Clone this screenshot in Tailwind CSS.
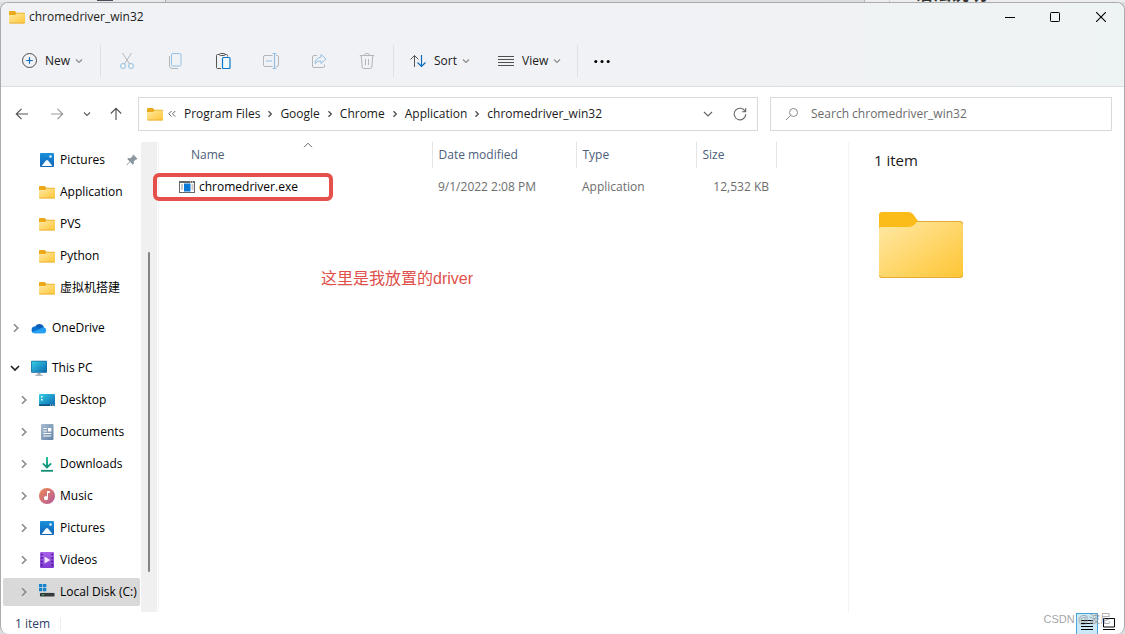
<!DOCTYPE html>
<html lang="en">
<head>
<meta charset="utf-8">
<title>chromedriver_win32</title>
<script src="https://cdn.jsdelivr.net/npm/@tailwindcss/browser@4"></script>
</head>
<body class="flex h-screen flex-col overflow-hidden bg-[#dcdedf] font-['Open_Sans','Noto_Sans_CJK_SC',sans-serif] text-[12px] leading-4 text-[#1a1a1a]">

<svg class="absolute size-0" aria-hidden="true">
  <defs>
    <linearGradient id="g-folder" x1="0" y1="0" x2="1" y2="1"><stop offset="0" stop-color="#ffe9a6"/><stop offset="1" stop-color="#ffc533"/></linearGradient>
    <linearGradient id="g-pic" x1="0" y1="0" x2="0" y2="1"><stop offset="0" stop-color="#1a92dc"/><stop offset="1" stop-color="#0f62b4"/></linearGradient>
    <linearGradient id="g-screen" x1="0" y1="0" x2="1" y2="1"><stop offset="0" stop-color="#36d0e6"/><stop offset="1" stop-color="#0b66ae"/></linearGradient>
    <linearGradient id="g-doc" x1="0" y1="0" x2="1" y2="1"><stop offset="0" stop-color="#a9bdd2"/><stop offset="1" stop-color="#6482a6"/></linearGradient>
    <linearGradient id="g-down" x1="0" y1="0" x2="0" y2="1"><stop offset="0" stop-color="#2cc29a"/><stop offset="1" stop-color="#0d9277"/></linearGradient>
    <linearGradient id="g-music" x1="0" y1="0" x2="1" y2="1"><stop offset="0" stop-color="#ec8a52"/><stop offset="1" stop-color="#b3599e"/></linearGradient>
    <linearGradient id="g-video" x1="0" y1="0" x2="0" y2="1"><stop offset="0" stop-color="#a861e8"/><stop offset="1" stop-color="#7e3bd0"/></linearGradient>
  </defs>
  <symbol id="folder" viewBox="0 0 16 16">
    <path d="M0 3a1 1 0 0 1 1-1h4.800l1.600 1.800H15a1 1 0 0 1 1 1V6H0z" fill="#e9aa1c"/>
    <path d="M0 6h6.200l1.400-1.500H15.200a.8.800 0 0 1 .8.800V13.500a1 1 0 0 1-1 1H1a1 1 0 0 1-1-1z" fill="url(#g-folder)"/>
    <path d="M.4 14h15.200" stroke="#e3ab35" stroke-width=".8"/>
  </symbol>
  <symbol id="pictures" viewBox="0 0 16 16">
    <rect x="1" y="1" width="14" height="14" rx="1" fill="url(#g-pic)"/>
    <circle cx="11.500" cy="4.500" r="1.300" fill="#d9efff"/>
    <path d="M2.500 14 7 8.600q1-1 2 0L13.500 14z" fill="#f4faff"/>
  </symbol>
  <symbol id="onedrive" viewBox="0 0 16 16">
    <path d="M4.200 6.500A5 5 0 0 1 13 7l-2 4-8 .5z" fill="#0f5db5"/>
    <path d="M3.500 13.200A3.300 3.300 0 0 1 4.300 6.600c2 0 3 1 4.500 2z" fill="#0a70cf"/>
    <path d="M3.500 13.200 9.500 8.400A4 4 0 0 1 12.700 7.200 3.100 3.100 0 0 1 13 13.200z" fill="#1f9df0"/>
    <path d="M1.200 12 8 9.300l7 2.600q-.7 1.300-2 1.300H3.500q-1.500 0-2.300-1.200z" fill="#2aa2f2"/>
  </symbol>
  <symbol id="pc" viewBox="0 0 16 16">
    <rect x="0" y=".8" width="16" height="12" rx="1" fill="#15649a"/>
    <rect x=".6" y="1.400" width="14.800" height="10.800" rx=".4" fill="url(#g-screen)"/>
    <path d="M6.500 12.800h3v2h-3z" fill="#9aa8b3"/><path d="M4.300 15.200h7.400" stroke="#8e9ba6" stroke-width="1"/>
  </symbol>
  <symbol id="desktop" viewBox="0 0 16 16">
    <rect x="0" y="2" width="16" height="12" rx="1" fill="url(#g-screen)"/>
    <path d="M2 4h1.500v1.500H2zM2 7h1.500v1.500H2z" fill="#fff"/>
    <path d="M0 12.300h16V13a1 1 0 0 1-1 1H1a1 1 0 0 1-1-1z" fill="#0c5686"/>
    <path d="M11 13h1m1 0h.8m.7 0h.8" stroke="#fff" stroke-width=".9"/>
  </symbol>
  <symbol id="documents" viewBox="0 0 16 16">
    <rect x="2" y="0" width="12.500" height="16" rx="1" fill="url(#g-doc)"/>
    <path d="M4.300 4.500h3.500M4.300 7h3.500M4.300 9.500h8M4.300 12h8" stroke="#fff" stroke-width="1.100"/><path d="M9 4h3.300v3.500H9z" fill="#fff"/>
  </symbol>
  <symbol id="downloads" viewBox="0 0 16 16">
    <path d="M8 1v10.500M3.800 7.300 8 11.500l4.200-4.200" fill="none" stroke="url(#g-down)" stroke-width="1.800"/>
    <path d="M7.100 1h1.800v10H7.100z" fill="url(#g-down)"/>
    <path d="M2 14.800h12" stroke="#128f74" stroke-width="1.800"/>
  </symbol>
  <symbol id="music" viewBox="0 0 16 16">
    <circle cx="8" cy="8" r="8" fill="url(#g-music)"/>
    <path d="M8 3h2.800v1.900H9v5.300a2 2 0 1 1-1-1.800z" fill="#fff"/>
  </symbol>
  <symbol id="videos" viewBox="0 0 16 16">
    <rect x="1" y="0" width="14" height="16" rx="1" fill="url(#g-video)"/>
    <path d="M2 2.500h1.600M2 6h1.600M2 9.500h1.600M2 13h1.600M12.400 2.500H14M12.400 6H14M12.400 9.500H14M12.400 13H14" stroke="#431a86" stroke-width="1.600"/>
    <path d="M5.500 4.500v7L11.300 8z" fill="#f2e8ff"/>
  </symbol>
  <symbol id="disk" viewBox="0 0 16 16">
    <path d="M0 0h3.300v3.200H0zM4 0h3.300v3.200H4zM0 4h3.300v3.200H0zM4 4h3.300v3.200H4z" fill="#1683cf"/>
    <path d="M2 8h12l1.500 1.500H1z" fill="#c9cccf"/><rect x="1" y="9" width="14.500" height="3.500" rx=".4" fill="#353a3d"/>
    <path d="M3 10.800h2" stroke="#3ad26b" stroke-width="1"/>
  </symbol>
  <symbol id="right" viewBox="0 0 8 10"><path d="M2 1.200 5.800 5 2 8.800" fill="none" stroke="currentColor" stroke-width="1.600"/></symbol>
  <symbol id="crumb" viewBox="0 0 8 10"><path d="M2.500 2.200 5.300 5 2.500 7.800" fill="none" stroke="currentColor" stroke-width="1.400"/></symbol>
  <symbol id="small-down" viewBox="0 0 10 8"><path d="M2 2.500 5 5.500l3-3" fill="none" stroke="currentColor" stroke-width="1.100"/></symbol>
  <symbol id="down" viewBox="0 0 10 8"><path d="M1 2 5 6l4-4" fill="none" stroke="currentColor" stroke-width="1.200"/></symbol>
</svg>

<div class="flex h-[2px] shrink-0 overflow-hidden">
  <div class="w-[166px] border-r border-[#a9abad] bg-[#e8e9ea] pl-[97px]"><div class="h-px w-4 bg-[#4a4a58]"></div></div>
  <div class="flex-1"></div>
  <div class="w-[261px] border-l border-[#b5b5b5] bg-[#ededed]">
    <div class="relative ml-6 h-full overflow-hidden border-l border-[#d0d0d0]"><span class="absolute -bottom-[3px] left-[25px] text-[18px] leading-6 font-bold text-[#333]" lang="zh">语法说明</span></div>
  </div>
</div>

<div class="flex min-h-0 flex-1 flex-col overflow-hidden rounded-lg border-x border-t border-[#a9abad] bg-white">
  <header class="shrink-0 border-b border-[#dcdedf] bg-linear-to-r from-[#f1f2f5] from-60% to-[#eef3f3]">
    <div class="flex h-8 items-start justify-between">
      <h1 class="flex items-center gap-1 pt-[6px] pl-2 font-normal"><svg class="size-4"><use href="#folder"/></svg>chromedriver_win32</h1>
      <div class="flex text-black">
        <button class="grid h-7 w-[45px] place-items-center" aria-label="Minimize"><svg class="size-[10px]" viewBox="0 0 10 10"><path d="M0 5.500h10" stroke="currentColor"/></svg></button>
        <button class="grid h-7 w-[46px] place-items-center" aria-label="Maximize"><svg class="size-[10px]" viewBox="0 0 10 10"><rect x=".5" y=".5" width="9" height="9" rx=".8" fill="none" stroke="currentColor"/></svg></button>
        <button class="grid h-7 w-[46px] place-items-center" aria-label="Close"><svg class="size-[10px]" viewBox="0 0 10 10"><path d="m0 0 10 10M10 0 0 10" stroke="currentColor" stroke-width="1.100"/></svg></button>
      </div>
    </div>
    <div class="flex h-[51px] items-center">
      <button class="flex w-[99px] items-center pl-5">
        <svg class="size-4" viewBox="0 0 16 16" fill="none"><circle cx="8.500" cy="7.500" r="7" stroke="#4d4d4d"/><path d="M8.500 4.200v6.600M5.200 7.500h6.600" stroke="#0a6cbd" stroke-width="1.200"/></svg>
        <span class="ml-2">New</span><svg class="ml-1 h-2 w-[10px] text-[#8a8a8a]"><use href="#small-down"/></svg>
      </button>
      <div class="h-8 w-px bg-[#dfe0e2]"></div>
      <div class="flex pl-[2px]">
        <button class="grid size-12 place-items-center" aria-label="Cut"><svg class="size-4" viewBox="0 0 16 16" fill="none"><path d="M3.500 0 10.500 11M12.500 0 5.500 11" stroke="#b4b6b9"/><circle cx="4" cy="13" r="2.500" stroke="#93bfe2"/><circle cx="12" cy="13" r="2.500" stroke="#93bfe2"/></svg></button>
        <button class="grid size-12 place-items-center" aria-label="Copy"><svg class="size-4" viewBox="0 0 16 16" fill="none"><rect x="4.500" y=".5" width="9.500" height="12.500" rx="1.500" stroke="#93bfe2"/><path d="M2.500 3v10a2.500 2.500 0 0 0 2.500 2.500h6" stroke="#b4b6b9"/></svg></button>
        <button class="grid size-12 place-items-center" aria-label="Paste"><svg class="size-4" viewBox="0 0 16 16" fill="none"><path d="M6 15.500H2.500a1 1 0 0 1-1-1V2.500a1 1 0 0 1 1-1h2M10 1.500h1.500a1 1 0 0 1 1 1v1" stroke="#555"/><rect x="4.500" y=".5" width="5.500" height="2" rx="1" stroke="#555"/><rect x="7.500" y="4.500" width="7.500" height="11" rx="1" fill="#eefaff" stroke="#0a78c8" stroke-width="1.200"/></svg></button>
        <button class="grid size-12 place-items-center" aria-label="Rename"><svg class="size-4" viewBox="0 0 16 16" fill="none"><path d="M9.500 2.500H2A1.500 1.500 0 0 0 .5 4v8A1.500 1.500 0 0 0 2 13.500h7.500M13 2.500h1A1.500 1.500 0 0 1 15.500 4v8a1.500 1.500 0 0 1-1.500 1.500h-1" stroke="#b4b6b9"/><path d="M11.500.5v15M9.500.5h4M9.500 15.500h4M3 8h6" stroke="#93bfe2" stroke-width="1.200"/></svg></button>
        <button class="grid size-12 place-items-center" aria-label="Share"><svg class="size-4" viewBox="0 0 16 16" fill="none"><path d="M6 2.500H3A1.500 1.500 0 0 0 1.500 4v9A1.500 1.500 0 0 0 3 14.500h9a1.500 1.500 0 0 0 1.500-1.500v-1.500" stroke="#b4b6b9"/><path d="M10 1.500 15 6l-5 4.500V8Q6 7.800 4 10.500 4.500 5 10 4z" stroke="#93bfe2" stroke-linejoin="round"/></svg></button>
        <button class="grid size-12 place-items-center" aria-label="Delete"><svg class="size-4" viewBox="0 0 16 16" fill="none" stroke="#b4b6b9"><path d="M.8 2.500h14.400M5.500 2.500a2.500 2.200 0 0 1 5 0M2.200 2.500l1 11.500a1.500 1.500 0 0 0 1.500 1.500h6.600a1.500 1.500 0 0 0 1.500-1.500l1-11.500M6.500 6v6M9.500 6v6"/></svg></button>
      </div>
      <div class="ml-[2px] h-8 w-px bg-[#dfe0e2]"></div>
      <button class="flex w-[88px] items-center pl-4">
        <svg class="size-4" viewBox="0 0 16 16" fill="none"><path d="M4.500 14V2.500M.5 6.500l4-4 4 4" stroke="#555"/><path d="M11.500 2v11.500M7.500 9.500l4 4 4-4" stroke="#0a6cbd" stroke-width="1.200"/></svg>
        <span class="ml-2">Sort</span><svg class="ml-1 h-2 w-[10px] text-[#8a8a8a]"><use href="#small-down"/></svg>
      </button>
      <button class="flex w-[95px] items-center pl-4">
        <svg class="size-4" viewBox="0 0 16 16"><path d="M0 3.500h16M0 6.500h16M0 9.500h16M0 12.500h16" stroke="#505050"/></svg>
        <span class="ml-2">View</span><svg class="ml-1 h-2 w-[10px] text-[#8a8a8a]"><use href="#small-down"/></svg>
      </button>
      <div class="h-8 w-px bg-[#dfe0e2]"></div>
      <button class="pl-4" aria-label="See more"><svg class="size-4" viewBox="0 0 16 16"><circle cx="1.800" cy="8.500" r="1.500"/><circle cx="8" cy="8.500" r="1.500"/><circle cx="14.200" cy="8.500" r="1.500"/></svg></button>
    </div>
  </header>

  <div class="flex shrink-0 items-center pt-[10px] pr-3 pb-[11px]">
    <nav class="flex w-[137px] items-center text-[#5a5a5a]" aria-label="History">
      <button class="ml-[14px]" aria-label="Back"><svg class="h-4 w-[14px]" viewBox="0 0 14 16" fill="none" stroke="#555" stroke-width="1.200"><path d="M13 8H1.500M6.500 2.800 1.300 8l5.200 5.200"/></svg></button>
      <button class="ml-[21px]" aria-label="Forward"><svg class="h-4 w-[14px]" viewBox="0 0 14 16" fill="none" stroke="#9a9a9a" stroke-width="1.200"><path d="M1 8h11.500M7.500 2.800 12.700 8l-5.200 5.200"/></svg></button>
      <button class="ml-[18px]" aria-label="Recent locations"><svg class="h-2 w-[10px]"><use href="#small-down"/></svg></button>
      <button class="ml-[17px]" aria-label="Up"><svg class="h-4 w-[14px]" viewBox="0 0 14 16" fill="none" stroke="#555" stroke-width="1.200"><path d="M7 14V2.500M1.800 7.500 7 2.300l5.200 5.200"/></svg></button>
    </nav>
    <div class="flex h-[34px] flex-1 items-center border border-[#d9d9d9] pl-2">
      <svg class="size-4"><use href="#folder"/></svg>
      <svg class="ml-[5px] h-[10px] w-2" viewBox="0 0 8 10" fill="none" stroke="#666"><path d="M3.500 2 .8 4.800l2.700 2.800M7.200 2 4.500 4.800l2.700 2.800"/></svg>
      <nav class="ml-2 flex items-center gap-[6px]" aria-label="Path">
        <a href="#">Program Files</a><svg class="h-[10px] w-2 text-[#555]"><use href="#crumb"/></svg>
        <a href="#">Google</a><svg class="h-[10px] w-2 text-[#555]"><use href="#crumb"/></svg>
        <a href="#">Chrome</a><svg class="h-[10px] w-2 text-[#555]"><use href="#crumb"/></svg>
        <a href="#">Application</a><svg class="h-[10px] w-2 text-[#555]"><use href="#crumb"/></svg>
        <a href="#">chromedriver_win32</a>
      </nav>
      <button class="ml-auto" aria-label="Previous locations"><svg class="h-2 w-[10px] text-[#666]"><use href="#down"/></svg></button>
      <button class="mr-[10px] ml-5" aria-label="Refresh"><svg class="size-[14px]" viewBox="0 0 14 14" fill="none" stroke="#6a6a6a" stroke-width="1.100"><path d="M12.200 4.500A5.800 5.800 0 1 0 12.800 7M12.700 1v3.800H9"/></svg></button>
    </div>
    <label class="ml-3 flex h-[34px] w-[342px] items-center border border-[#d9d9d9] pl-[14px]">
      <svg class="size-[14px]" viewBox="0 0 14 14" fill="none" stroke="#8a8a8a"><circle cx="8.500" cy="5.500" r="4"/><path d="M5.700 8.300 1 13"/></svg>
      <input class="ml-3 min-w-0 flex-1 outline-none placeholder:text-[#6b6b6b]" type="text" placeholder="Search chromedriver_win32" aria-label="Search chromedriver_win32">
    </label>
  </div>

  <div class="flex min-h-0 flex-1">
    <nav class="w-[140px] shrink-0 pt-[2px] whitespace-nowrap text-black" aria-label="Folders">
      <a href="#" class="flex h-8 items-center pl-[38px]"><svg class="size-4"><use href="#pictures"/></svg><span class="ml-[5px]">Pictures</span><svg class="mr-[3px] ml-auto size-3" viewBox="0 0 12 12" fill="#8b979f"><path d="M7.200.5 11.500 4.800l-1 .7-.7-.1-2 2.200.1 2.200-1 .9L4.200 8 1 11.300l-.6-.6L3.700 7.500 1.300 5.100l.9-1 2.300.1 2.100-2-.1-.8z"/></svg></a>
      <a href="#" class="flex h-8 items-center pl-[38px]"><svg class="size-4"><use href="#folder"/></svg><span class="ml-[5px]">Application</span></a>
      <a href="#" class="flex h-8 items-center pl-[38px]"><svg class="size-4"><use href="#folder"/></svg><span class="ml-[5px]">PVS</span></a>
      <a href="#" class="flex h-8 items-center pl-[38px]"><svg class="size-4"><use href="#folder"/></svg><span class="ml-[5px]">Python</span></a>
      <a href="#" class="flex h-8 items-center pl-[38px]"><svg class="size-4"><use href="#folder"/></svg><span class="ml-[5px]" lang="zh">虚拟机搭建</span></a>
      <a href="#" class="mt-2 flex h-8 items-center pl-[11px]"><svg class="h-[10px] w-2 text-[#888]"><use href="#right"/></svg><svg class="ml-[11px] size-4"><use href="#onedrive"/></svg><span class="ml-[5px]">OneDrive</span></a>
      <a href="#" class="mt-2 flex h-8 items-center pl-[9px]"><svg class="h-2 w-[10px] text-[#222]" viewBox="0 0 10 8"><path d="M1 2 5 6l4-4" fill="none" stroke="currentColor" stroke-width="1.600"/></svg><svg class="ml-[11px] size-4"><use href="#pc"/></svg><span class="ml-[5px]">This PC</span></a>
      <a href="#" class="flex h-8 items-center pl-[19px]"><svg class="h-[10px] w-2 text-[#888]"><use href="#right"/></svg><svg class="ml-[11px] size-4"><use href="#desktop"/></svg><span class="ml-[5px]">Desktop</span></a>
      <a href="#" class="flex h-8 items-center pl-[19px]"><svg class="h-[10px] w-2 text-[#888]"><use href="#right"/></svg><svg class="ml-[11px] size-4"><use href="#documents"/></svg><span class="ml-[5px]">Documents</span></a>
      <a href="#" class="flex h-8 items-center pl-[19px]"><svg class="h-[10px] w-2 text-[#888]"><use href="#right"/></svg><svg class="ml-[11px] size-4"><use href="#downloads"/></svg><span class="ml-[5px]">Downloads</span></a>
      <a href="#" class="flex h-8 items-center pl-[19px]"><svg class="h-[10px] w-2 text-[#888]"><use href="#right"/></svg><svg class="ml-[11px] size-4"><use href="#music"/></svg><span class="ml-[5px]">Music</span></a>
      <a href="#" class="flex h-8 items-center pl-[19px]"><svg class="h-[10px] w-2 text-[#888]"><use href="#right"/></svg><svg class="ml-[11px] size-4"><use href="#pictures"/></svg><span class="ml-[5px]">Pictures</span></a>
      <a href="#" class="flex h-8 items-center pl-[19px]"><svg class="h-[10px] w-2 text-[#888]"><use href="#right"/></svg><svg class="ml-[11px] size-4"><use href="#videos"/></svg><span class="ml-[5px]">Videos</span></a>
      <a href="#" class="mt-[2px] mr-px ml-[2px] flex h-7 items-center rounded-xs bg-[#d9d9d9] pl-[17px]"><svg class="h-[10px] w-2 text-[#888]"><use href="#right"/></svg><svg class="ml-[11px] size-4"><use href="#disk"/></svg><span class="ml-[5px]">Local Disk (C:)</span></a>
    </nav>
    <div class="w-4 shrink-0 bg-[#f0f0f0] pt-[110px] pl-[7px]"><div class="h-[320px] w-[2px] rounded-full bg-[#858585]"></div></div>

    <main class="relative ml-px min-w-0 flex-1 border-l border-[#f5f5f5] text-[#6d6d6d]">
      <table class="table-fixed border-collapse text-left">
        <thead class="text-[#4c607a]">
          <tr class="h-[26px]">
            <th scope="col" class="relative w-[273px] border-r border-[#e5e5e5] pl-8 font-normal">Name
              <svg class="absolute top-0 left-[144px] h-[6px] w-[10px]" viewBox="0 0 10 6" fill="none" stroke="#666"><path d="M1 5.200 5 1.200l4 4"/></svg></th>
            <th scope="col" class="w-[144px] border-r border-[#e5e5e5] pl-[6px] font-normal">Date modified</th>
            <th scope="col" class="w-[120px] border-r border-[#e5e5e5] pl-[6px] font-normal">Type</th>
            <th scope="col" class="w-[80px] border-r border-[#e5e5e5] pl-[6px] font-normal">Size</th>
          </tr>
        </thead>
        <tbody>
          <tr class="h-[38px]">
            <td class="relative pl-5 text-black">
              <span class="flex items-center gap-1"><svg class="size-4" viewBox="0 0 16 16"><rect x=".5" y="2.500" width="15" height="11" fill="#fff" stroke="#666"/><path d="M0 3h16" stroke="#666" stroke-width="2"/><rect x="5" y="4.500" width="6.500" height="8" fill="#0a78d4"/><path d="M2 6h2M2 8h2M2 10h2M12.500 6h2M12.500 8h2M12.500 10h2" stroke="#777" stroke-width=".8"/><path d="M11 3h1m1 0h1" stroke="#fff"/></svg>chromedriver.exe</span>
              <span class="absolute top-[5px] -left-[6px] h-7 w-[180px] rounded-md border-4 border-[#e5504b]"></span>
            </td>
            <td class="pl-[6px]">9/1/2022 2:08 PM</td>
            <td class="pl-[6px]">Application</td>
            <td class="pr-[7px] text-right">12,532 KB</td>
          </tr>
        </tbody>
      </table>
      <p class="mt-[61px] ml-[162px] font-['Liberation_Sans','Noto_Sans_CJK_SC',sans-serif] text-[16px] leading-6 text-[#e0504a]" lang="zh">这里是我放置的driver</p>
    </main>

    <aside class="w-[276px] shrink-0 border-l border-[#f3f3f3] pt-2 pl-[25px]">
      <h2 class="text-[15px] leading-5">1 item</h2>
      <svg class="mt-[41px] ml-1 h-[68px] w-[86px]" viewBox="0 0 86 68">
        <path d="M1 4a3 3 0 0 1 3-3h26q3 0 5 2l5 7-5 7H1z" fill="#fbbb18"/>
        <path d="M1 18q0-2 3-2h26q4 0 6-2l3-3q1-1 3-1h40a3 3 0 0 1 3 3v51a3 3 0 0 1-3 3H4a3 3 0 0 1-3-3z" fill="url(#g-folder)"/>
        <path d="M39 10.500h43a2.500 2.500 0 0 1 2.500 2.500M1.500 64.500A2.500 2.500 0 0 0 4 66.500h78a2.500 2.500 0 0 0 2.500-2.500" fill="none" stroke="#e3ab35"/>
      </svg>
    </aside>
  </div>

  <footer class="relative flex h-[22px] shrink-0 items-center pt-[2px] pl-[14px] text-[#2c4069]">
    <span>1 item</span><span class="ml-[10px] h-3 w-px bg-[#ececec]"></span>
    <div class="mr-1 ml-auto flex text-black">
      <button class="grid size-[22px] place-items-center border border-[#45a5d8] bg-[#cbe8f7]" aria-label="Details view"><svg class="h-3 w-3" viewBox="0 0 12 12"><path d="M0 2.500h12M0 5.500h12M0 8.500h12M0 11.500h12" stroke="currentColor"/></svg></button>
      <button class="grid size-[22px] place-items-center" aria-label="Large icons view"><svg class="size-3" viewBox="0 0 12 12" fill="none" stroke="currentColor"><path d="M.5.500h11v8.500H.5zM0 11.500h12"/></svg></button>
    </div>
    <span class="absolute right-[13px] bottom-[7px] font-['Liberation_Sans','Noto_Sans_CJK_SC',sans-serif] text-[11px] text-[#999]/90" lang="zh">CSDN @波尼</span>
  </footer>
</div>
</body>
</html>
